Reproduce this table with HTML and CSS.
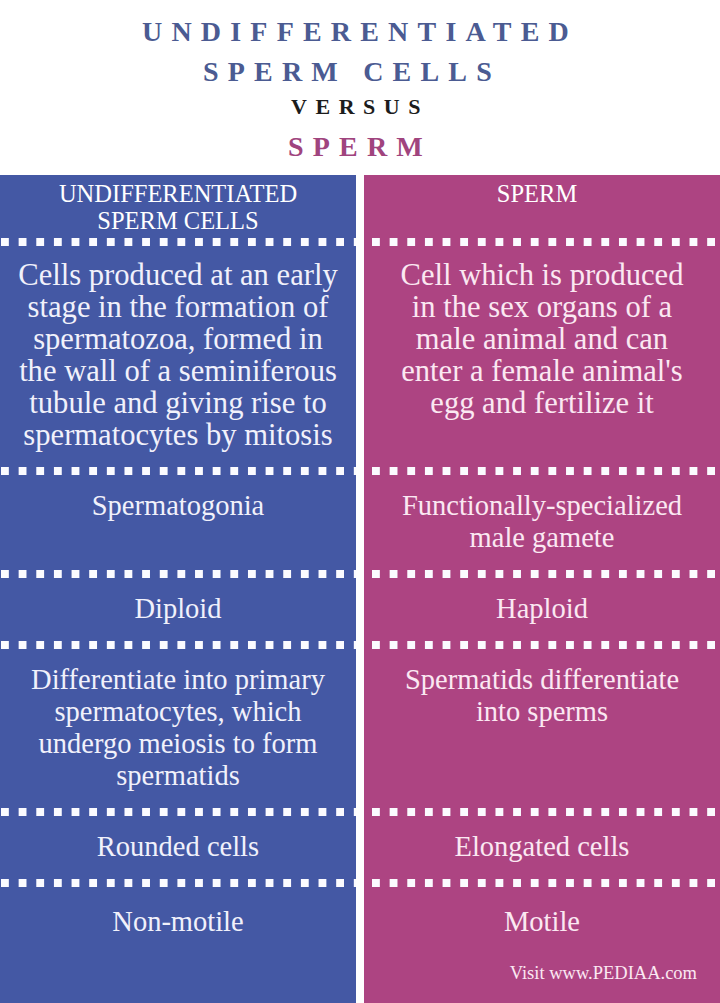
FILE: index.html
```html
<!DOCTYPE html>
<html lang="en">
<head>
<meta charset="utf-8">
<title>Undifferentiated Sperm Cells versus Sperm</title>
<link rel="stylesheet" href="styles.css">
</head>
<body>
<div class="page">
  <header class="title">
    <div class="t-line t-blue">UNDIFFERENTIATED</div>
    <div class="t-line t-blue t-shift">SPERM CELLS</div>
    <div class="t-line t-versus">VERSUS</div>
    <div class="t-line t-pink t-last">SPERM</div>
  </header>
  <main class="table">
    <div class="cell head blue">UNDIFFERENTIATED<br>SPERM CELLS</div>
    <div class="cell head head-right pink">SPERM</div>

    <div class="sep blue"></div>
    <div class="sep pink"></div>

    <div class="cell big blue">Cells produced at an early<br>stage in the formation of<br>spermatozoa, formed in<br>the wall of a seminiferous<br>tubule and giving rise to<br>spermatocytes by mitosis</div>
    <div class="cell big pink">Cell which is produced<br>in the sex organs of a<br>male animal and can<br>enter a female animal's<br>egg and fertilize it</div>

    <div class="sep blue"></div>
    <div class="sep pink"></div>

    <div class="cell body blue">Spermatogonia</div>
    <div class="cell body pink">Functionally-specialized<br>male gamete</div>

    <div class="sep blue"></div>
    <div class="sep pink"></div>

    <div class="cell body blue">Diploid</div>
    <div class="cell body pink">Haploid</div>

    <div class="sep blue"></div>
    <div class="sep pink"></div>

    <div class="cell body blue">Differentiate into primary<br>spermatocytes, which<br>undergo meiosis to form<br>spermatids</div>
    <div class="cell body pink">Spermatids differentiate<br>into sperms</div>

    <div class="sep blue"></div>
    <div class="sep pink"></div>

    <div class="cell body blue">Rounded cells</div>
    <div class="cell body pink">Elongated cells</div>

    <div class="sep blue"></div>
    <div class="sep pink"></div>

    <div class="cell body last blue">Non-motile</div>
    <div class="cell body last pink">
      <div>Motile</div>
      <div class="credit">Visit www.PEDIAA.com</div>
    </div>
  </main>
</div>
</body>
</html>
```
FILE: styles.css
```css
html, body {
  margin: 0;
  padding: 0;
  background: #ffffff;
}

.page {
  width: 720px;
  height: 1003px;
  display: flex;
  flex-direction: column;
  font-family: "Liberation Serif", "Times New Roman", serif;
}

.title {
  padding: 12px 0 8px;
  text-align: center;
  font-weight: bold;
}

.t-line {
  font-size: 28px;
  line-height: 40px;
  letter-spacing: 9.2px;
}

.t-blue {
  color: #4b5b92;
}

.t-shift {
  padding-right: 16px;
}

.t-versus {
  color: #1c1c1c;
  font-size: 22px;
  line-height: 30px;
  letter-spacing: 8.5px;
}

.t-pink {
  color: #a0447e;
}

.t-last {
  margin-top: 5px;
}

.table {
  flex: 1;
  display: grid;
  grid-template-columns: 356px 356px;
  column-gap: 8px;
  grid-template-rows: repeat(12, auto) 1fr;
}

.blue {
  background: #4458a4;
  color: #f1f1fb;
}

.pink {
  background: #ad4482;
  color: #fbe8f2;
}

.cell {
  text-align: center;
}

.head {
  font-size: 24.5px;
  line-height: 27px;
  padding: 5px 0 4px;
  color: #ffffff;
}

.head-right {
  padding-right: 10px;
}

.big {
  font-size: 30.6px;
  line-height: 32px;
  padding: 13px 0 16px;
}

.body {
  font-size: 28.5px;
  line-height: 32px;
  padding: 15px 0 16px;
}

.last {
  padding-top: 19px;
  padding-bottom: 0;
}

.pink.last {
  display: flex;
  flex-direction: column;
}

.credit {
  margin-top: auto;
  align-self: flex-end;
  font-size: 18.5px;
  line-height: 22px;
  padding: 0 23px 19px 0;
}

.sep {
  height: 8px;
  background-image: linear-gradient(to right, #fbfbff 8px, transparent 8px);
  background-size: 17.65px 8px;
  background-repeat: repeat-x;
}

.sep.blue {
  background-color: #4458a4;
  background-position: 1px 0;
}

.sep.pink {
  background-color: #ad4482;
  background-position: 8px 0;
}
```
